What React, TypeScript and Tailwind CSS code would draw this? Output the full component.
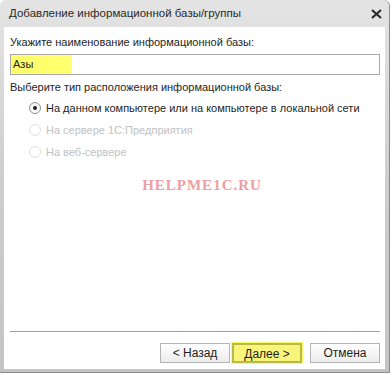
export default function App() {
  const radios = [
    { label: "На данном компьютере или на компьютере в локальной сети", on: true, disabled: false },
    { label: "На сервере 1С:Предприятия", on: false, disabled: true },
    { label: "На веб-сервере", on: false, disabled: true },
  ]

  return (
    <div className="w-[392px] h-[375px] bg-white font-['Liberation_Sans',Arial,sans-serif] text-[11px] text-[#1e1e1e]">
      <div className="w-[390px] h-[373px] rounded-t-[6px] bg-gradient-to-b from-[#e4e4e4] via-[#cdcdcd] to-[#c4c4c4] border-r border-b border-[#8c8c8c] flex flex-col px-[4px] pb-[3px]">
        {/* title bar */}
        <div className="h-[27px] flex items-center justify-between pl-[5px] pr-[3px] shrink-0">
          <span className="text-[11.5px] text-[#2a2a2a]">Добавление информационной базы/группы</span>
          <svg width="11" height="10" viewBox="0 0 11 10" className="mt-[1px]">
            <path d="M1 1 L10 9 M10 1 L1 9" stroke="#2b2b2b" strokeWidth="2.2" />
          </svg>
        </div>

        {/* body */}
        <div className="flex-1 bg-white flex flex-col pl-[6px] pr-[5px]">
          <div className="mt-[8px] leading-[14px]">Укажите наименование информационной базы:</div>
          <div className="mt-[5px] h-[21px] border border-[#a9a9a9] flex">
            <div className="w-[61px] bg-[#ffff6e] pl-[2px] flex items-center">Азы</div>
          </div>
          <div className="mt-[5px] leading-[14px]">Выберите тип расположения информационной базы:</div>

          <div className="mt-[7px] pl-[19px] flex flex-col gap-[8px]">
            {radios.map((r) => (
              <div key={r.label} className="flex items-center gap-[5px] h-[14px] whitespace-nowrap">
                <span
                  className={
                    "w-[12px] h-[12px] rounded-full border flex items-center justify-center " +
                    (r.disabled ? "border-[#e0e0e0] bg-white" : "border-[#8e8e8e] bg-gradient-to-b from-[#f2f2f2] to-white")
                  }
                >
                  {r.on && <span className="w-[4px] h-[4px] rounded-full bg-[#222]" />}
                </span>
                <span className={r.disabled ? "text-[#c2c2c2]" : ""}>{r.label}</span>
              </div>
            ))}
          </div>

          <div className="mt-[15px] flex justify-center pl-[14px]">
            <span className="font-['Liberation_Serif',serif] text-[15px] font-bold tracking-[1px] text-[#e8888c] opacity-80">
              HELPME1C.RU
            </span>
          </div>

          <div className="flex-1" />

          <div className="h-px bg-[#a0a0a0] mb-[11px]" />
          <div className="flex justify-end gap-[2px] mb-[6px]">
            <button className="w-[70px] h-[20px] border border-[#b4b4b4] bg-gradient-to-b from-white to-[#ececec] text-[12px]">
              &lt; Назад
            </button>
            <button className="w-[70px] h-[20px] bg-[#f8f57a] border-[2px] border-[#b9b94a] shadow-[0_0_0_1px_#fbfb66] text-[12px]">
              Далее &gt;
            </button>
            <button className="ml-[6px] w-[70px] h-[20px] border border-[#b4b4b4] bg-gradient-to-b from-white to-[#ececec] text-[12px]">
              Отмена
            </button>
          </div>
        </div>
      </div>
    </div>
  )
}
